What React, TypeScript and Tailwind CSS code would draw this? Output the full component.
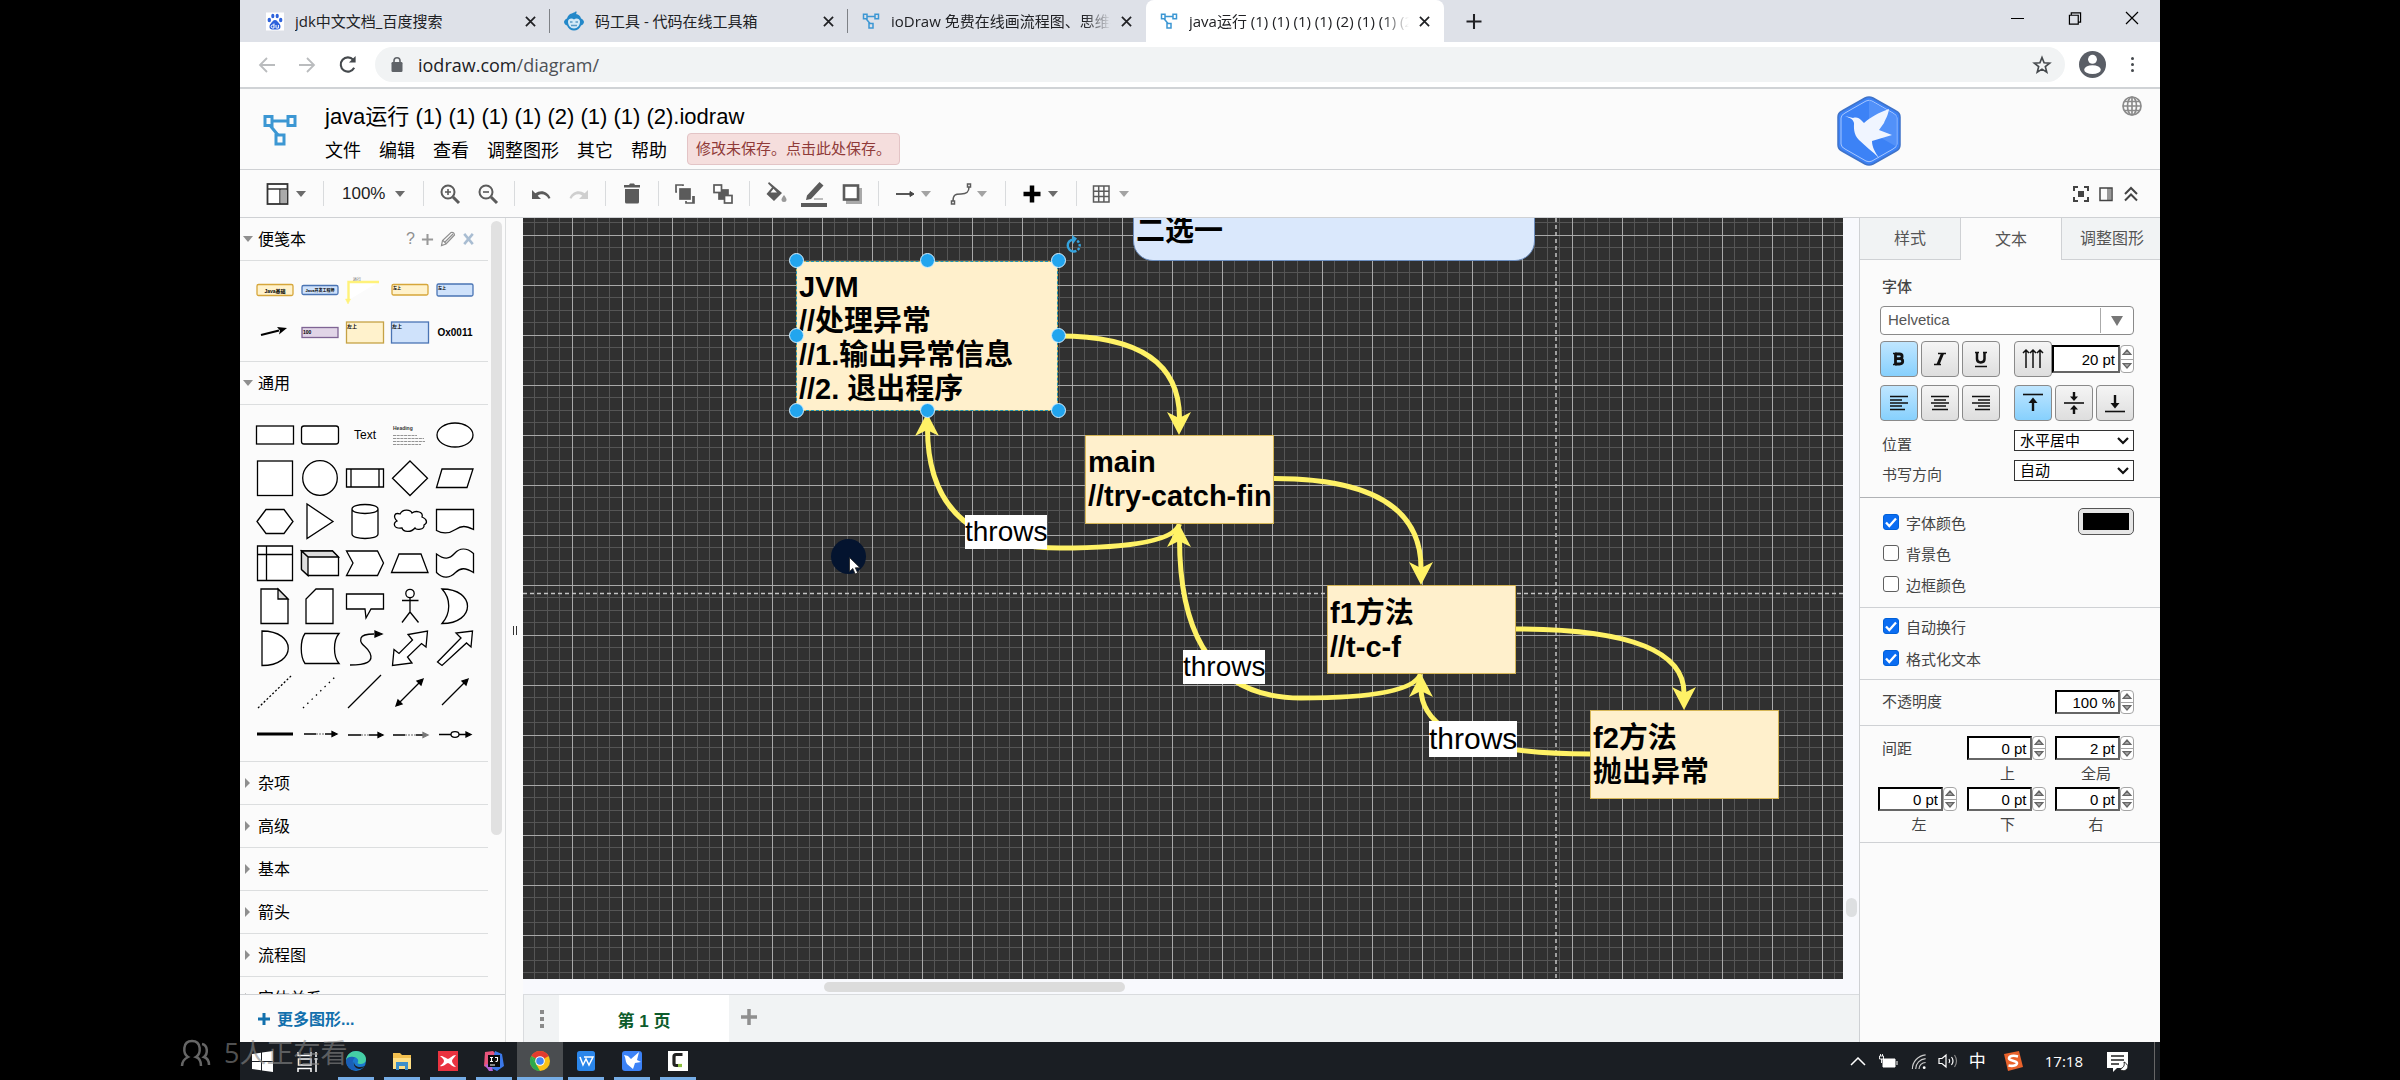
import React from 'react';

const UI = "font-['Open_Sans','Noto_Sans_CJK_SC',sans-serif]";
const APP = "font-['Liberation_Sans','Noto_Sans_CJK_SC',sans-serif]";

/* ---------- shared icons ---------- */

function FlowLogo({ className }: { className: string }) {
  return (
    <svg viewBox="0 0 34 32" className={className} fill="none" stroke="#3c97d3" strokeWidth="3">
      <rect x="2" y="2.5" width="7" height="9" />
      <rect x="25" y="2.5" width="7" height="9" />
      <rect x="13" y="21" width="8" height="9" />
      <path d="M9 7H25M7.500 12L15 21" />
    </svg>
  );
}

function Caret({ dim = false }: { dim?: boolean }) {
  return (
    <svg viewBox="0 0 10 6" className="h-[6px] w-[10px] shrink-0" fill={dim ? '#a3a3a3' : '#6b6b6b'}>
      <path d="M0 0h10L5 6z" />
    </svg>
  );
}

/* ---------- browser chrome ---------- */

type TabInfo = { title: string; icon: React.ReactNode; active?: boolean; line?: boolean; fade?: boolean };

const paw = (
  <svg viewBox="0 0 18 18" className="h-[19px] w-[18px] shrink-0">
    <rect width="18" height="18" fill="#fff" />
    <g fill="#2d62dc">
      <ellipse cx="3.300" cy="7.500" rx="1.700" ry="2.200" />
      <ellipse cx="6.800" cy="3.500" rx="1.600" ry="2.300" />
      <ellipse cx="11.200" cy="3.500" rx="1.600" ry="2.300" />
      <ellipse cx="14.700" cy="7.500" rx="1.700" ry="2.200" />
      <path d="M9 7.500c2 0 2.800 2 4.200 3.400 2 2 1.800 6-1.400 6H6.200c-3.200 0-3.400-4-1.400-6C6.200 9.500 7 7.500 9 7.500z" />
    </g>
    <path d="M8 11v4.500H6.500c-1.800 0-1.800-3 0-3H8M10 12.500v2.500q0 .6.700.6h1.700v-3.100" fill="none" stroke="#fff" strokeWidth="1" />
  </svg>
);

const monkey = (
  <svg viewBox="0 0 20 20" className="h-[20px] w-[20px] shrink-0">
    <path d="M12 0c-1 2-5 2-7 4-1 1-1.500 2-2 3.500-1.500.5-3 2-3 3.500s1.500 3 3 3.500C4 17.500 7 19.500 10 19.500s6-2 7-5c1.500-.5 3-2 3-3.500s-1.500-3-3-3.500C16.500 5 14.500 3.500 12 3c.8-.8.8-2 0-3z" fill="#2388c9" />
    <path d="M10 8.500C12 6.500 16 7.500 16 10.500c0 4-2.500 7-6 7s-6-3-6-7C4 7.500 8 6.500 10 8.500z" fill="#d3e9f7" />
    <path d="M6 11h2.500M11.500 11H14M7 14.500h6" stroke="#5c9cc6" strokeWidth="1.300" />
  </svg>
);

const tabs: TabInfo[] = [
  { title: 'jdk中文文档_百度搜索', icon: paw, line: true },
  { title: '码工具 - 代码在线工具箱', icon: monkey, line: true },
  { title: 'ioDraw 免费在线画流程图、思维导图', icon: <FlowLogo className="h-[16px] w-[18px] shrink-0" />, fade: true },
  { title: 'java运行 (1) (1) (1) (1) (2) (1) (1) (2)', icon: <FlowLogo className="h-[16px] w-[18px] shrink-0" />, active: true, fade: true },
];

function TabStrip() {
  return (
    <div className="flex h-[42px] items-stretch bg-[#dee1e8] pl-[12px]">
      <div role="tablist" className="flex">
        {tabs.map((t) => (
          <div
            key={t.title}
            role="tab"
            aria-selected={!!t.active}
            className={`relative flex w-[298px] items-center pl-[14px] pr-[13px] text-[15px] text-[#202124] ${t.active ? 'rounded-t-[8px] bg-white' : ''}`}
          >
            {t.icon}
            <span
              className={`ml-[11px] mr-[8px] flex-1 overflow-hidden whitespace-nowrap ${t.fade ? '[mask-image:linear-gradient(to_right,black_88%,transparent)]' : ''}`}
            >
              {t.title}
            </span>
            <button aria-label="关闭标签页" className="flex w-[14px] justify-center">
              <svg viewBox="0 0 12 12" className="h-[11px] w-[11px]" stroke="#202124" strokeWidth="1.900">
                <path d="M1 1l10 10M11 1L1 11" />
              </svg>
            </button>
            {t.line && <span className="absolute right-0 top-[9px] h-[24px] w-px bg-[#7e8186]" />}
          </div>
        ))}
      </div>
      <button aria-label="新标签页" className="ml-[22px] flex w-[18px] items-center">
        <svg viewBox="0 0 16 16" className="h-[15px] w-[16px]" stroke="#202124" strokeWidth="2.200">
          <path d="M8 0v16M0 8h16" />
        </svg>
      </button>
      <div className="ml-auto flex">
        <button aria-label="最小化" className="flex h-[36px] w-[57px] items-center justify-center">
          <span className="h-px w-[13px] bg-black" />
        </button>
        <button aria-label="还原" className="flex h-[36px] w-[57px] items-center justify-center">
          <svg viewBox="0 0 14 14" className="h-[13px] w-[14px]" fill="none" stroke="#000" strokeWidth="1.300">
            <path d="M1 3.500h9.500V13H1zM3 3.500V1h10v10h-2.500" />
          </svg>
        </button>
        <button aria-label="关闭" className="flex h-[36px] w-[57px] items-center justify-center">
          <svg viewBox="0 0 14 14" className="h-[14px] w-[14px]" stroke="#000" strokeWidth="1.200">
            <path d="M1 1l12 12M13 1L1 13" />
          </svg>
        </button>
      </div>
    </div>
  );
}

function AddressBar() {
  return (
    <div className="flex h-[47px] items-center border-b-2 border-[#d0d3d6] bg-white">
      <button aria-label="后退" className="ml-[18px] w-[18px]">
        <svg viewBox="0 0 18 16" className="h-[16px] w-[18px]" fill="none" stroke="#babcbe" strokeWidth="1.800">
          <path d="M17 8H2M9 1L2 8l7 7" />
        </svg>
      </button>
      <button aria-label="前进" className="ml-[22px] w-[18px]">
        <svg viewBox="0 0 18 16" className="h-[16px] w-[18px]" fill="none" stroke="#babcbe" strokeWidth="1.800">
          <path d="M1 8h15M9 1l7 7-7 7" />
        </svg>
      </button>
      <button aria-label="重新加载" className="ml-[22px] w-[20px]">
        <svg viewBox="0 0 20 20" className="h-[19px] w-[20px]" fill="none" stroke="#45494d" strokeWidth="2.200">
          <path d="M16.500 13.500A7.500 7.500 0 1 1 15.500 5" />
          <path d="M18 1v7h-7z" fill="#45494d" stroke="none" />
        </svg>
      </button>
      <div className="ml-[17px] flex h-[35px] flex-1 items-center rounded-full bg-[#f1f3f4] pl-[16px] pr-[13px]">
        <svg viewBox="0 0 12 15" className="h-[15px] w-[12px]">
          <rect x="0.500" y="5" width="11" height="10" rx="1.200" fill="#5f6368" />
          <path d="M3 6V3.800a3 3 0 0 1 6 0V6" fill="none" stroke="#5f6368" strokeWidth="1.600" />
        </svg>
        <span className="ml-[15px] text-[18px] leading-[24px] text-[#202124]">
          iodraw.com<span className="text-[#4d5156]">/diagram/</span>
        </span>
        <button aria-label="收藏" className="ml-auto">
          <svg viewBox="0 0 24 24" className="h-[22px] w-[20px]" fill="none" stroke="#45494d" strokeWidth="2">
            <path d="M12 3l2.500 6.300 6.700.4-5.200 4.300 1.700 6.600L12 17l-5.700 3.600L8 14 2.800 9.700l6.700-.4z" />
          </svg>
        </button>
      </div>
      <button aria-label="用户" className="ml-[14px]">
        <svg viewBox="0 0 26 26" className="h-[27px] w-[27px]">
          <circle cx="13" cy="13" r="13" fill="#5a5e66" />
          <circle cx="13" cy="8" r="4.300" fill="#fff" />
          <ellipse cx="13" cy="18" rx="8" ry="4.200" fill="#fff" />
        </svg>
      </button>
      <button aria-label="菜单" className="ml-[22px] mr-[24px] flex w-[8px] flex-col items-center gap-[3px]">
        <span className="h-[3px] w-[3px] rounded-full bg-[#45494d]" />
        <span className="h-[3px] w-[3px] rounded-full bg-[#45494d]" />
        <span className="h-[3px] w-[3px] rounded-full bg-[#45494d]" />
      </button>
    </div>
  );
}

/* ---------- editor header ---------- */

function Header() {
  return (
    <header className="flex h-[81px] items-start border-b border-[#cfd1d4] bg-[#fbfbfb]">
      <FlowLogo className="ml-[23px] mt-[25px] h-[32px] w-[34px]" />
      <div className="ml-[28px] mt-[12px]">
        <h1 className="text-[22px] leading-[32px] text-black">java运行 (1) (1) (1) (1) (2) (1) (1) (2).iodraw</h1>
        <div className="flex h-[32px] items-center">
          <nav className="flex gap-[18px] pt-[4px] text-[18px] leading-[32px] text-black">
            {['文件', '编辑', '查看', '调整图形', '其它', '帮助'].map((m) => (
              <button key={m}>{m}</button>
            ))}
          </nav>
          <button className="ml-[20px] h-[32px] rounded-[4px] border border-[#e3c4c6] bg-[#f5dedd] px-[8px] text-[15px] text-[#8f3a38]">
            修改未保存。点击此处保存。
          </button>
        </div>
      </div>
      <div className="ml-auto flex items-start">
        <svg viewBox="0 0 64 70" className="mt-[7px] h-[70px] w-[64px]">
          <path d="M28 2q4-2 8 0l23 13q4 2 4 6v28q0 4-4 6L36 68q-4 2-8 0L5 55q-4-2-4-6V21q0-4 4-6z" fill="#3c82f6" stroke="#3f73c9" strokeWidth="1.500" />
          <path d="M29 5q3-1.500 6 0l21 12q4 2 4 5v26q0 3-4 5L35 65q-3 1.500-6 0L8 53q-4-2-4-5V22q0-3 4-5z" fill="none" stroke="#a8c8ff" />
          <path d="M32 4v31l28 16V20z" fill="#5b97fb" opacity=".7" />
          <path d="M8 20l8 2c4-1 6 0 8 2l3 3c7-6 14-10 25-14-1 7-4 11-5 14l-5 7 13 5-20 6c0 6 3 11 7 17-7-7-14-12-20-18-6-6-5-13-5-17-1-4-4-5-9-7z" fill="#f0f5ff" />
        </svg>
        <button aria-label="语言" className="ml-[220px] mr-[17px] mt-[6px]">
          <svg viewBox="0 0 22 22" className="h-[22px] w-[22px]" fill="none" stroke="#8b8b8b" strokeWidth="1.700">
            <circle cx="11" cy="11" r="9" />
            <ellipse cx="11" cy="11" rx="4.500" ry="9" />
            <path d="M2 11h18M11 2v18M3.500 6.500h15M3.500 15.500h15" />
          </svg>
        </button>
      </div>
    </header>
  );
}

/* ---------- toolbar ---------- */

function Group({ children, last = false }: { children: React.ReactNode; last?: boolean }) {
  return (
    <div className="flex h-full items-center">
      <div className="flex items-center px-[7px]">{children}</div>
      {!last && <span className="h-[25px] w-px bg-[#d9dbdd]" />}
    </div>
  );
}

function Tool({ label, children, wide = false }: { label: string; children: React.ReactNode; wide?: boolean }) {
  return (
    <button
      aria-label={label}
      className={`flex h-[34px] shrink-0 items-center ${wide ? 'w-[56px] gap-[4px] pl-[7px]' : 'w-[38px] justify-center'}`}
    >
      {children}
    </button>
  );
}

const I = 'h-[24px] w-[24px] shrink-0';

function Toolbar() {
  return (
    <div className="flex h-[48px] items-center border-b border-[#cfd1d4] bg-[#fbfbfb]">
      <button aria-label="视图" className="flex w-[83px] items-center gap-[7px] pl-[25px]">
        <svg viewBox="0 0 24 24" className={I}>
          <rect x="2.500" y="2" width="20" height="20" fill="#fff" stroke="#333" strokeWidth="1.800" />
          <path d="M2 7h20M15 7v15" stroke="#333" strokeWidth="1.500" />
          <rect x="15.500" y="8" width="6" height="13" fill="#aaa" />
        </svg>
        <Caret />
      </button>
      <span className="h-[25px] w-px bg-[#d9dbdd]" />
      <button className="flex w-[99px] items-center gap-[10px] pl-[18px] text-[17px] text-[#222]">
        100% <Caret />
      </button>
      <span className="h-[25px] w-px bg-[#d9dbdd]" />
      <Group>
        <Tool label="放大">
          <svg viewBox="0 0 24 24" className={I} fill="none" stroke="#5b5b5b" strokeWidth="2">
            <circle cx="10" cy="10" r="6.500" />
            <path d="M7 10h6M10 7v6" strokeWidth="1.600" />
            <path d="M15 15l6 6" strokeWidth="3" />
          </svg>
        </Tool>
        <Tool label="缩小">
          <svg viewBox="0 0 24 24" className={I} fill="none" stroke="#5b5b5b" strokeWidth="2">
            <circle cx="10" cy="10" r="6.500" />
            <path d="M7 10h6" strokeWidth="1.600" />
            <path d="M15 15l6 6" strokeWidth="3" />
          </svg>
        </Tool>
      </Group>
      <Group>
        <Tool label="撤销">
          <svg viewBox="0 0 24 24" className={I} fill="#5b5b5b">
            <path d="M3 8v9h9l-3.300-3.300c3.800-2.800 8.500-1.500 10.800 3l2-.8C18.800 9 11.500 7.200 6.300 11.300z" />
          </svg>
        </Tool>
        <Tool label="重做">
          <svg viewBox="0 0 24 24" className={I} fill="#cfcfcf">
            <path d="M21 8v9h-9l3.300-3.300c-3.800-2.800-8.500-1.500-10.800 3l-2-.8C5.200 9 12.500 7.200 17.700 11.300z" />
          </svg>
        </Tool>
      </Group>
      <Group>
        <Tool label="删除">
          <svg viewBox="0 0 24 24" className={I} fill="#5b5b5b">
            <path d="M4 3h5l1-1.500h4L15 3h5v2.500H4zM5 7h14v13q0 1.500-1.500 1.500h-11Q5 21.500 5 20z" />
          </svg>
        </Tool>
      </Group>
      <Group>
        <Tool label="移至最前">
          <svg viewBox="0 0 24 24" className={I} fill="none" stroke="#5b5b5b" strokeWidth="1.700">
            <rect x="7" y="7" width="10" height="10" fill="#5b5b5b" />
            <path d="M4 10H3V3h7v1M20 14v7h-7v-2M14 21h7v-7" />
          </svg>
        </Tool>
        <Tool label="移至最后">
          <svg viewBox="0 0 24 24" className={I} fill="none" stroke="#5b5b5b" strokeWidth="1.700">
            <rect x="8" y="8" width="9" height="9" fill="#5b5b5b" />
            <rect x="3" y="3" width="7.500" height="7.500" fill="#fff" />
            <rect x="13.500" y="13.500" width="7.500" height="7.500" fill="#fff" />
          </svg>
        </Tool>
      </Group>
      <Group>
        <Tool label="填充颜色">
          <svg viewBox="0 0 24 24" className={I} fill="#5b5b5b">
            <path d="M5 0l-1 1.500 4 4L2.500 12l7.500 7 8-8zM9.500 6.800L13 10.500H6.500z" fillRule="evenodd" />
            <path d="M20 13s-2.500 3-2.500 4.500a2.500 2.500 0 0 0 5 0C22.500 16 20 13 20 13z" fill="#999" />
          </svg>
        </Tool>
        <Tool label="线条颜色">
          <svg viewBox="0 0 26 26" className="h-[26px] w-[26px]" fill="#5b5b5b">
            <path d="M5 19l1-4.500L18.500 1l4 3.500L10 18zM0 22h26v4H0z" />
            <path d="M13 18h9" stroke="#aaa" strokeWidth="1.500" />
          </svg>
        </Tool>
        <Tool label="阴影">
          <svg viewBox="0 0 24 24" className={I}>
            <rect x="6" y="6" width="16" height="16" fill="#a9a9a9" />
            <rect x="4" y="3.500" width="14" height="14" fill="#fff" stroke="#5b5b5b" strokeWidth="2.600" />
          </svg>
        </Tool>
      </Group>
      <Group>
        <Tool label="连线" wide>
          <svg viewBox="0 0 24 24" className={I} fill="#444" stroke="#444">
            <path d="M3 12h16" strokeWidth="1.800" />
            <path d="M17 9.500l4 2.500-4 2.500z" />
          </svg>
          <Caret dim />
        </Tool>
        <Tool label="路点" wide>
          <svg viewBox="0 0 24 24" className={I} fill="none" stroke="#5b5b5b" strokeWidth="1.500">
            <path d="M4 19c0-6 2-7 8-7s8-2 8-7" />
            <rect x="2.500" y="19" width="3" height="3" fill="#fff" />
            <rect x="18.500" y="2" width="3" height="3" fill="#fff" />
          </svg>
          <Caret dim />
        </Tool>
      </Group>
      <Group>
        <Tool label="插入" wide>
          <svg viewBox="0 0 24 24" className={I} stroke="#000" strokeWidth="4.500">
            <path d="M12 3.500v17M3.500 12h17" />
          </svg>
          <Caret />
        </Tool>
      </Group>
      <Group last>
        <Tool label="表格" wide>
          <svg viewBox="0 0 24 24" className={I} fill="none" stroke="#5b5b5b" strokeWidth="1.500">
            <path d="M2.500 4h15.500v16H2.500zM2.500 9.300H18M2.500 14.600H18M7.700 4v16M12.900 4v16" />
          </svg>
          <Caret dim />
        </Tool>
      </Group>
      <div className="ml-auto mr-[21px] flex items-center gap-[9px]">
        <button aria-label="全屏">
          <svg viewBox="0 0 16 16" className="h-[16px] w-[16px]" fill="none" stroke="#444" strokeWidth="2">
            <path d="M1 5V1h4M11 1h4v4M15 11v4h-4M5 15H1v-4" />
            <rect x="6" y="6" width="4" height="4" fill="#444" />
          </svg>
        </button>
        <button aria-label="格式面板">
          <svg viewBox="0 0 16 16" className="h-[16px] w-[16px]" fill="none" stroke="#444" strokeWidth="1.500">
            <path d="M11 2v12.500" stroke="#999" strokeWidth="4" />
            <rect x="2" y="2" width="12" height="12.500" />
          </svg>
        </button>
        <button aria-label="收起">
          <svg viewBox="0 0 16 16" className="h-[16px] w-[16px]" fill="none" stroke="#444" strokeWidth="2">
            <path d="M2 8l6-6 6 6M2 14.500l6-6 6 6" />
          </svg>
        </button>
      </div>
    </div>
  );
}

/* ---------- shape library ---------- */

const shapes: React.ReactNode[] = [
  <rect x="3.500" y="12" width="37" height="18" />,
  <rect x="3.500" y="12" width="37" height="18" rx="2.500" />,
  <text x="22" y="25" textAnchor="middle" fontSize="12" fill="#000" stroke="none">Text</text>,
  <g stroke="none" fill="#333">
    <text x="5" y="16" fontSize="5" fontWeight="bold">Heading</text>
    <path d="M5 21.500h24M5 24.500h31M5 27.500h32M5 30.500h28" stroke="#888" strokeWidth=".9" strokeDasharray="3 .7" />
  </g>,
  <ellipse cx="22" cy="21" rx="18" ry="12" />,

  <rect x="4.500" y="4" width="35" height="34.500" />,
  <circle cx="22" cy="21" r="17.300" />,
  <path d="M3.500 12h37v18h-37zM8 12v18M36 12v18" />,
  <path d="M22 4l17.500 17.300L22 38.500 4.500 21.300z" />,
  <path d="M9 12h31l-6 18.500H3.500z" />,

  <path d="M4 21.500L13 9.500h18l9 12L31 33.500H13z" />,
  <path d="M9 4v34.500l26-17z" />,
  <path d="M9 9v25c0 6 26 6 26 0V9c0-6-26-6-26 0c0 6 26 6 26 0" />,
  <path d="M12 14c3-6 11-4 12-1 4-3 12-1 10 4 5 2 6 6 2 8 1 5-8 5-9 3-4 5-12 4-13 0-9 1-9-5-5-7-4-4-3-9 3-7z" />,
  <path d="M3.500 9.500h37v20c-8-4-12-4-18 0-6 4-12 5-19 1z" />,

  <path d="M4.500 4h35v34.500h-35zM4.500 12.500h35M13.500 4v34.500" />,
  <g>
    <path d="M3.500 9h31l6 6v18.500H10l-6.500-6z" />
    <path d="M3.500 9h31l6 6H10z" fill="#ddd" />
    <path d="M3.500 9l6.500 6v18.500l-6.500-6z" fill="#ddd" />
  </g>,
  <path d="M3.500 9h31l6 12-6 12.500h-31L10 21z" />,
  <path d="M11 12h22l7 18.500H3.500z" />,
  <path d="M3.500 12c8 6 13 5 18-.500s12-6 19 0v19c-8-5-13-5-18 0s-12 7-19 0z" />,

  <g>
    <path d="M8 4h17l10 10v24.500H8z" />
    <path d="M25 4v10h10z" fill="#ddd" />
  </g>,
  <path d="M18 4h17v34.500H8V14z" />,
  <path d="M3.500 9h37v15H28l-5 9-1-9H3.500z" />,
  <g>
    <circle cx="22" cy="8.500" r="4.200" />
    <path d="M22 13v14M14 15.500h16.500M22 27l-8 10.500M22 27l8.500 10.500" />
  </g>,
  <path d="M9 4c34 0 34 34.500 0 34.500 9-10 9-25 0-34.500z" />,

  <path d="M9 4c35 0 35 34.500 0 34.500z" />,
  <path d="M7 6.500h34c-6 7-6 23 0 30H7c-5-7-5-23 0-30z" />,
  <g>
    <path d="M7 38c16 0 24-3 20-12-3-7-11-8-9-15 1-3 6-4 13-4" fill="none" />
    <path d="M32 4l7 3-7 3z" fill="#000" />
  </g>,
  <path d="M39.500 4l-1.500 16-4.500-3.500-14 13.500 4.500 6-19.500 2.500 1.500-16 5 4 13.500-13.500-4.500-5.500z" />,
  <path d="M39.500 4L38 20l-4.500-4L9 38.500 4.500 35 28 11l-5-5z" />,

  <path d="M5 38L38 6" strokeDasharray="2 2" />,
  <path d="M5 38L37 7" strokeDasharray="1.500 4.500" />,
  <path d="M5 38L38 5" />,
  <g>
    <path d="M9 35L34 10" />
    <path d="M35 9l-6 2 4 4zM8 36l6-2-4-4z" fill="#000" />
  </g>,
  <g>
    <path d="M9 35L34 10" />
    <path d="M35 9l-6 2 4 4z" fill="#000" />
  </g>,

  <path d="M4 21h36" strokeWidth="2.800" />,
  <g>
    <path d="M6 21h12M27 21h8" />
    <path d="M18 21h9" stroke="#999" strokeDasharray="2 1" />
    <path d="M34 18.500l5 2.500-5 2.500z" fill="#000" />
  </g>,
  <g>
    <path d="M5 22h13M26 22h9" />
    <path d="M18 22h8" stroke="#999" strokeDasharray="2 1" />
    <path d="M35 19.500l5 2.500-5 2.500z" fill="#000" />
  </g>,
  <g>
    <path d="M5 22h12M28 22h8" />
    <path d="M17 22h11" stroke="#999" strokeDasharray="2 1" />
    <path d="M35 19.500l5 2.500-5 2.500z" fill="#777" stroke="#777" />
  </g>,
  <g>
    <path d="M6 21.500h12M26 21.500h9" />
    <ellipse cx="22" cy="21.500" rx="4" ry="2.800" />
    <path d="M33 19l5 2.500-5 2.500z" fill="#000" />
  </g>,
];

const scratch: React.ReactNode[] = [
  <g>
    <rect x="4" y="15.500" width="36" height="11" rx="1.500" fill="#fff2cc" stroke="#d6a63a" />
    <text x="22" y="23.500" fontSize="5" fontWeight="bold" textAnchor="middle" fill="#000" stroke="none">Java基础</text>
  </g>,
  <g>
    <rect x="4" y="16.500" width="36" height="9" rx="1.500" fill="#cfe2fb" stroke="#4a74b4" />
    <text x="22" y="22.500" fontSize="4" fontWeight="bold" textAnchor="middle" fill="#000" stroke="none">Java开发工程师</text>
  </g>,
  <g stroke="#fff27a">
    <path d="M36 13H5.500v18" strokeWidth="2.400" />
    <path d="M2.500 30h5L5 35z" fill="#fff27a" strokeWidth=".5" />
    <text x="10" y="12" fontSize="4" fill="#555" stroke="none">运行</text>
  </g>,
  <g>
    <rect x="4" y="15.500" width="36" height="10.500" rx="1.500" fill="#fff2cc" stroke="#d6a63a" />
    <text x="5" y="21" fontSize="4" fontWeight="bold" fill="#000" stroke="none">左上</text>
  </g>,
  <g>
    <rect x="4" y="15" width="36" height="12" rx="1.500" fill="#cfe2fb" stroke="#4a74b4" />
    <text x="5" y="20.500" fontSize="4" fontWeight="bold" fill="#000" stroke="none">左上</text>
  </g>,
  <g>
    <path d="M8 24l18-4.500" strokeWidth="2" />
    <path d="M34 17l-10-1 3 3.500-1 4z" fill="#000" stroke="none" />
  </g>,
  <g>
    <rect x="4" y="16.500" width="36" height="10" fill="#e1d5e7" stroke="#7f6494" />
    <text x="5" y="23" fontSize="5" fontWeight="bold" fill="#000" stroke="none">100</text>
  </g>,
  <g>
    <rect x="3.500" y="11" width="37" height="21" fill="#fff2cc" stroke="#c5a245" />
    <text x="4" y="17" fontSize="5" fontWeight="bold" fill="#000" stroke="none">左上</text>
  </g>,
  <g>
    <rect x="3.500" y="11" width="37" height="21" fill="#cfe2fb" stroke="#4a74b4" />
    <text x="4" y="17" fontSize="5" fontWeight="bold" fill="#000" stroke="none">左上</text>
  </g>,
  <text x="22" y="25" fontSize="10" fontWeight="bold" textAnchor="middle" fill="#000" stroke="none">Ox0011</text>,
];

function Cell({ children }: { children: React.ReactNode }) {
  return (
    <div className="flex items-center justify-center">
      <svg viewBox="0 0 44 42" className="h-[42px] w-[44px]" fill="#fff" stroke="#000" strokeWidth="1.300">
        {children}
      </svg>
    </div>
  );
}

function SectionHead({ title, open = false, children }: { title: string; open?: boolean; children?: React.ReactNode }) {
  return (
    <div className="flex h-[43px] shrink-0 items-center border-b border-[#dcdedf] pl-[3px]">
      <button aria-expanded={open} className="flex items-center gap-[5px] text-[16px] text-black">
        <svg viewBox="0 0 10 10" className="h-[10px] w-[10px]" fill="#8f8f8f">
          {open ? <path d="M0 2h10L5 8z" /> : <path d="M2 0l5 5-5 5z" />}
        </svg>
        <span className="pt-[2px]">{title}</span>
      </button>
      {children}
    </div>
  );
}

function Sidebar() {
  return (
    <aside className="flex w-[266px] shrink-0 flex-col border-r border-[#dcdedf] bg-[#fbfbfb]">
      <div className="flex min-h-0 flex-1 overflow-hidden">
        <div className="w-[248px] shrink-0">
          <SectionHead title="便笺本" open>
            <div className="ml-auto mr-[13px] flex items-center gap-[6px] text-[#8f8f8f]">
              <button aria-label="帮助" className="text-[16px]">?</button>
              <button aria-label="添加">
                <svg viewBox="0 0 14 14" className="h-[13px] w-[13px]" stroke="#999" strokeWidth="2.200">
                  <path d="M7 1v12M1 7h12" />
                </svg>
              </button>
              <button aria-label="编辑">
                <svg viewBox="0 0 16 16" className="h-[16px] w-[16px]" fill="none" stroke="#8f8f8f" strokeWidth="1.200">
                  <path d="M1.500 14.500l1-5L11 1.500q3-.5 3.500 2.500L6 13zM3 9.500l3.500 3.500M5 11L13 3" />
                </svg>
              </button>
              <button aria-label="关闭">
                <svg viewBox="0 0 14 14" className="h-[12px] w-[13px]" stroke="#a9bdd2" strokeWidth="3">
                  <path d="M2 1l10 12M12 1L2 13" />
                </svg>
              </button>
            </div>
          </SectionHead>
          <div className="grid h-[101px] grid-cols-[repeat(5,45px)] content-start border-b border-[#dcdedf] pl-[12px] pt-[8px]">
            {scratch.map((s, i) => (
              <Cell key={i}>{s}</Cell>
            ))}
          </div>
          <SectionHead title="通用" open />
          <div className="border-b border-[#dcdedf] pb-[6px] pl-[12px] pt-[9px]">
            <div className="grid h-[341px] auto-rows-fr grid-cols-[repeat(5,45px)]">
              {shapes.map((s, i) => (
                <Cell key={i}>{s}</Cell>
              ))}
            </div>
          </div>
          {['杂项', '高级', '基本', '箭头', '流程图', '实体关系'].map((t) => (
            <SectionHead key={t} title={t} />
          ))}
        </div>
        <div className="ml-[3px] mt-[3px] h-[614px] w-[11px] rounded-full bg-[#e1e1e1]" />
      </div>
      <button className="flex h-[48px] shrink-0 items-center gap-[7px] border-t border-[#cfd1d4] pl-[18px] text-[16px] font-bold text-[#1270ad]">
        <svg viewBox="0 0 12 12" className="h-[12px] w-[12px]" stroke="#1270ad" strokeWidth="3">
          <path d="M6 0v12M0 6h12" />
        </svg>
        <span className="pt-[2px]">更多图形...</span>
      </button>
    </aside>
  );
}

/* ---------- diagram ---------- */

function Node({ className, lines }: { className: string; lines: string[] }) {
  return (
    <div
      className={`absolute flex flex-col justify-center whitespace-nowrap border border-[#d6b656] bg-[#fff0cc] pl-[2px] text-[29px] font-bold leading-[34px] text-black ${className}`}
    >
      {lines.map((l) => (
        <div key={l}>{l}</div>
      ))}
    </div>
  );
}

function Edges() {
  const down = 'M0 0l-12-23 12 6 12-6z';
  const up = 'M0 0l-12 23 12-6 12 6z';
  const heads = [
    [656, 217, down],
    [898, 367, down],
    [1161, 492, down],
    [404, 195, up],
    [656, 306, up],
    [898, 456, up],
  ] as const;
  return (
    <svg className="absolute inset-0 h-full w-full">
      <defs>
        <pattern id="grid" x="-1" y="17" width="50" height="50" patternUnits="userSpaceOnUse">
          <path d="M12.500 0v50M25.500 0v50M37.500 0v50M0 12.500h50M0 25.500h50M0 37.500h50" stroke="#555" />
          <path d="M.5 0v50M0 .5h50" stroke="#a9a9a9" />
        </pattern>
      </defs>
      <rect width="100%" height="100%" fill="url(#grid)" />
      <path d="M0 375.500H4000M1033 0V2000" stroke="#c4c4c4" strokeWidth="1.500" strokeDasharray="4 3" fill="none" />
      <g fill="none" stroke="#fff266" strokeWidth="5">
        <path d="M536 118Q656.500 118 656.500 200" />
        <path d="M751 260.500Q898 260.500 898 350" />
        <path d="M992 411Q1161 411 1161 475" />
        <path d="M656.500 306Q649 330 537 330Q404.500 330 404.500 210" />
        <path d="M897.500 456Q889 480 778 480Q656.500 480 656.500 320" />
        <path d="M1067 536Q898 536 898 470" />
      </g>
      <g fill="#fff266">
        {heads.map(([x, y, d], i) => (
          <path key={i} d={d} transform={`translate(${x} ${y})`} />
        ))}
      </g>
    </svg>
  );
}

const handles = [
  'left-[266px] top-[35px]', 'left-[397px] top-[35px]', 'left-[528px] top-[35px]',
  'left-[266px] top-[110px]', 'left-[528px] top-[110px]',
  'left-[266px] top-[185px]', 'left-[397px] top-[185px]', 'left-[528px] top-[185px]',
];

function Canvas() {
  return (
    <div className={`relative min-h-0 flex-1 overflow-hidden bg-[#303030] ${APP}`}>
      <Edges />
      <div className="absolute left-[610px] top-[-60px] h-[103px] w-[402px] rounded-[20px] border border-[#6c8ebf] bg-[#dae8fc] pl-[2px] pt-[55px] text-[29px] font-bold leading-[34px] text-black">
        二选一
      </div>
      <Node className="left-[273px] top-[43px] h-[150px] w-[262px] pt-[4px]" lines={['JVM', '//处理异常', '//1.输出异常信息', '//2. 退出程序']} />
      <Node className="left-[562px] top-[217px] h-[89px] w-[189px] pb-[2px]" lines={['main', '//try-catch-fin']} />
      <Node className="left-[804px] top-[367px] h-[89px] w-[189px]" lines={['f1方法', '//t-c-f']} />
      <Node className="left-[1067px] top-[492px] h-[89px] w-[189px]" lines={['f2方法', '抛出异常']} />
      <span className="absolute left-[442px] top-[297px] bg-white text-[28px] leading-[34px] text-black">throws</span>
      <span className="absolute left-[660px] top-[432px] bg-white text-[28px] leading-[34px] text-black">throws</span>
      <span className="absolute left-[906px] top-[503px] bg-white text-[30px] leading-[36px] text-black">throws</span>
      <div className="absolute left-[273px] top-[43px] h-[150px] w-[262px] border border-dashed border-[#1d93b5]" />
      {handles.map((h) => (
        <span key={h} className={`absolute h-[15px] w-[15px] rounded-full border border-[#d4efff] bg-[#22a5ee] ${h}`} />
      ))}
      <svg viewBox="0 0 16 18" className="absolute left-[543px] top-[17px] h-[18px] w-[16px]" fill="none" stroke="#35a3dd" strokeWidth="2.400">
        <path d="M7.500 4.500A6 6 0 0 0 8 16.500" />
        <path d="M8 16.500A6 6 0 0 0 11 5.500" strokeDasharray="2.500 1.500" />
        <path d="M6 0l5 3.500L7 9z" fill="#35a3dd" stroke="none" />
      </svg>
      <span className="absolute left-[308px] top-[321px] h-[35px] w-[35px] rounded-full bg-[#04142f]" />
      <svg viewBox="0 0 12 18" className="absolute left-[326px] top-[339px] h-[18px] w-[12px]" fill="#fff" stroke="#222" strokeWidth=".8">
        <path d="M.5 .5v14l3.300-3 2.400 5.500 2.500-1-2.400-5.200H11z" />
      </svg>
    </div>
  );
}

function Center() {
  return (
    <main className="flex min-w-0 flex-1 flex-col">
      <div className="flex min-h-0 flex-1 bg-[#f8f9fd]">
        <Canvas />
        <div className="flex w-[16px] shrink-0 flex-col items-center">
          <span className="mt-[680px] h-[19px] w-[11px] rounded-full bg-[#dddfe1]" />
        </div>
      </div>
      <div className="flex h-[15px] items-center bg-[#f8f9fd] pl-[301px]">
        <span className="h-[10px] w-[301px] rounded-full bg-[#dcdcdc]" />
      </div>
      <div className="flex h-[48px] shrink-0 border-l border-t border-[#d9dbde] bg-[#f1f3f4]">
        <button aria-label="页面菜单" className="flex w-[35px] flex-col items-center justify-center gap-[3px]">
          <span className="h-[4px] w-[4px] bg-[#8a8a8a]" />
          <span className="h-[4px] w-[4px] bg-[#8a8a8a]" />
          <span className="h-[4px] w-[4px] bg-[#8a8a8a]" />
        </button>
        <button className="w-[170px] bg-white pt-[6px] text-[17px] font-bold text-[#0d5c2c]">第 1 页</button>
        <button aria-label="添加页面" className="flex w-[39px] items-center justify-center pb-[4px]">
          <svg viewBox="0 0 16 16" className="h-[16px] w-[16px]" stroke="#8f8f8f" strokeWidth="3.500">
            <path d="M8 0v16M0 8h16" />
          </svg>
        </button>
      </div>
    </main>
  );
}

/* ---------- format panel ---------- */

function Spin({ tall = false }: { tall?: boolean }) {
  return (
    <span className={`flex w-[14px] flex-col rounded-[4px] border border-[#a5a5a5] bg-white ${tall ? 'h-[28px]' : 'h-[24px]'}`}>
      <button aria-label="增加" className="flex flex-1 items-center justify-center border-b border-[#a5a5a5]">
        <svg viewBox="0 0 10 6" className="h-[6px] w-[10px]" fill="#aaa" stroke="#666" strokeWidth="1.300"><path d="M1 5.500h8L5 1z" /></svg>
      </button>
      <button aria-label="减少" className="flex flex-1 items-center justify-center">
        <svg viewBox="0 0 10 6" className="h-[6px] w-[10px]" fill="#aaa" stroke="#666" strokeWidth="1.300"><path d="M1 .5h8L5 5z" /></svg>
      </button>
    </span>
  );
}

function Field({ value, label, hideLabel = false }: { value: string; label: string; hideLabel?: boolean }) {
  return (
    <label className="flex flex-col">
      <span className="flex">
        <input
          defaultValue={value}
          aria-label={label}
          className="h-[24px] w-[65px] border-[2px] border-b-[#666] border-l-black border-r-[#666] border-t-black bg-white pr-[3px] text-right text-[15px] text-black"
        />
        <Spin />
      </span>
      {!hideLabel && <span className="mt-[4px] h-[20px] pl-[3px] text-center text-[15px] leading-[20px]">{label}</span>}
    </label>
  );
}

function Fmt({ label, on = false, children }: { label: string; on?: boolean; children: React.ReactNode }) {
  return (
    <button
      aria-label={label}
      aria-pressed={on}
      className={`flex h-[36px] w-[38px] items-center justify-center rounded-[4px] border border-[#8a8a8a] bg-linear-to-b ${on ? 'from-[#bfe6ff] to-[#86d0fd]' : 'from-[#f5f5f5] to-[#dedede]'}`}
    >
      <svg viewBox="0 0 22 22" className="h-[22px] w-[22px]" fill="none" stroke="#111" strokeWidth="1.600">
        {children}
      </svg>
    </button>
  );
}

function Check({ label, on = false, children }: { label: string; on?: boolean; children?: React.ReactNode }) {
  return (
    <div className="flex items-center">
      <label className="flex h-[20px] items-center gap-[7px] pl-[5px] text-[15px]">
        <span className="relative flex">
          <input
            type="checkbox"
            defaultChecked={on}
            className="peer h-[16px] w-[16px] appearance-none rounded-[3px] border border-[#5f5f5f] bg-white checked:border-[#0060d8] checked:bg-[#0b6df2]"
          />
          <svg viewBox="0 0 16 16" className="pointer-events-none absolute inset-0 hidden h-[16px] w-[16px] peer-checked:block" fill="none" stroke="#fff" strokeWidth="2.300">
            <path d="M3 8.500L6.300 12 13 4.500" />
          </svg>
        </span>
        <span className="pt-[5px]">{label}</span>
      </label>
      {children}
    </div>
  );
}

function Drop({ label, value }: { label: string; value: string }) {
  return (
    <label className="mt-[9px] flex items-center justify-between pl-[4px] text-[15px]">
      <span className="h-[21px] pt-[4px] leading-[21px]">{label}</span>
      <span className="relative">
        <select className="block h-[21px] w-[120px] appearance-none border border-[#333] bg-white pl-[5px] text-[15px] leading-[19px] text-black">
          <option>{value}</option>
        </select>
        <svg viewBox="0 0 12 8" className="pointer-events-none absolute right-[5px] top-[7px] h-[8px] w-[12px]" fill="none" stroke="#111" strokeWidth="2.200">
          <path d="M1 1l5 5 5-5" />
        </svg>
      </span>
    </label>
  );
}

const sect = 'border-b border-[#cfd1d4] pl-[18px] pr-[26px]';

function FormatPanel() {
  return (
    <aside className="flex w-[301px] shrink-0 flex-col border-l border-[#cfd1d4] bg-[#fbfbfb] text-[#444]">
      <div role="tablist" className="flex h-[42px] text-[16px] text-[#555]">
        <button role="tab" aria-selected={false} className="w-[101px] border-b border-r border-[#cfd1d4] bg-[#f1f3f4]">样式</button>
        <button role="tab" aria-selected={true} className="w-[100px] pt-[2px]">文本</button>
        <button role="tab" aria-selected={false} className="flex-1 border-b border-l border-[#cfd1d4] bg-[#f1f3f4] pl-[2px]">调整图形</button>
      </div>
      <section className="border-b border-[#b0b2b5] pb-[16px] pl-[18px] pr-[26px]">
        <div className="mt-[17px] pl-[4px] text-[15px] font-medium leading-[20px]">字体</div>
        <div className="ml-[2px] mt-[9px] flex h-[29px] rounded-[4px] border border-[#8a8a8a] bg-white">
          <input aria-label="字体" defaultValue="Helvetica" className="min-w-0 flex-1 bg-transparent pl-[7px] text-[15px] text-[#555]" />
          <button aria-label="选择字体" className="my-px flex w-[33px] items-center justify-center border-l border-[#aaa]">
            <svg viewBox="0 0 12 10" className="h-[10px] w-[12px]" fill="#777"><path d="M0 0h12L6 10z" /></svg>
          </button>
        </div>
        <div className="ml-[2px] mt-[6px] flex items-center justify-between">
          <div className="flex gap-[3px]">
            <Fmt label="粗体" on>
              <path d="M7 6h4.500c3.500 0 3.500 4.700 0 4.700H7M11.500 10.700c4.300 0 4.300 5.300 0 5.300H7M7.500 6v10" strokeWidth="2.800" />
              <path d="M5 5.500h4M5 16.500h4" strokeWidth="1.500" />
            </Fmt>
            <Fmt label="斜体">
              <path d="M9 5.500h8M5 16.500h7" />
              <path d="M13.500 5.500l-4.500 11" strokeWidth="3" />
            </Fmt>
            <Fmt label="下划线">
              <path d="M7 4.500v6.500c0 4.500 7.500 4.500 7.500 0V4.500" strokeWidth="2.500" />
              <path d="M5 18.500h12M5 4.500h4M13 4.500h4" />
            </Fmt>
          </div>
          <div className="flex items-center">
            <Fmt label="文字方向">
              <path d="M4 20V2M11 20V2M18 20V2M1 5l3-3 3 3M8 5l3-3 3 3M15 5l3-3 3 3" strokeWidth="1.500" />
            </Fmt>
            <input
              aria-label="字号"
              defaultValue="20 pt"
              className="h-[28px] w-[68px] border-[2px] border-b-[#666] border-l-black border-r-[#666] border-t-black bg-white pr-[3px] text-right text-[15px] text-black"
            />
            <Spin tall />
          </div>
        </div>
        <div className="ml-[2px] mt-[8px] flex justify-between">
          <div className="flex gap-[3px]">
            <Fmt label="左对齐" on>
              <path d="M2 4.500h18M2 8h12M2 11h18M2 14h12M2 17.500h15" />
            </Fmt>
            <Fmt label="居中">
              <path d="M2 4.500h18M5 8h12M2 11h18M5 14h12M3 17.500h16" />
            </Fmt>
            <Fmt label="右对齐">
              <path d="M2 4.500h18M8 8h12M2 11h18M8 14h12M5 17.500h15" />
            </Fmt>
          </div>
          <div className="flex gap-[3px]">
            <Fmt label="顶端对齐" on>
              <path d="M1 2.500h20" />
              <path d="M11 19v-9" strokeWidth="2.400" />
              <path d="M6.500 11L11 5.500l4.500 5.500z" fill="#111" stroke="none" />
            </Fmt>
            <Fmt label="垂直居中">
              <path d="M1 11h20" />
              <path d="M11 -2v7M11 24v-7" strokeWidth="2.400" />
              <path d="M7 4.500h8L11 9zM7 17.500h8L11 13z" fill="#111" stroke="none" />
            </Fmt>
            <Fmt label="底端对齐">
              <path d="M1 19.500h20" />
              <path d="M11 3v9" strokeWidth="2.400" />
              <path d="M6.500 11L11 16.500l4.500-5.500z" fill="#111" stroke="none" />
            </Fmt>
          </div>
        </div>
        <Drop label="位置" value="水平居中" />
        <Drop label="书写方向" value="自动" />
      </section>
      <section className={`${sect} pb-[13px] pt-[10px]`}>
        <Check label="字体颜色" on>
          <button aria-label="选择字体颜色" className="ml-auto h-[27px] w-[56px] rounded-[5px] border border-[#555] bg-[#e6e6e6] p-[4px]">
            <span className="block h-full bg-black" />
          </button>
        </Check>
        <div className="mt-[8px] flex flex-col gap-[11px]">
          <Check label="背景色" />
          <Check label="边框颜色" />
        </div>
      </section>
      <section className={`${sect} flex flex-col gap-[12px] pb-[11px] pt-[8px]`}>
        <Check label="自动换行" on />
        <Check label="格式化文本" on />
      </section>
      <section className={`${sect} flex items-center justify-between pb-[11px] pt-[10px]`}>
        <span className="pl-[4px] text-[15px]">不透明度</span>
        <Field value="100 %" label="不透明度" hideLabel />
      </section>
      <section className={`${sect} pb-[7px] pt-[10px]`}>
        <div className="flex justify-between">
          <span className="w-[79px] pl-[4px] pt-px text-[15px] leading-[24px]">间距</span>
          <Field value="0 pt" label="上" />
          <Field value="2 pt" label="全局" />
        </div>
        <div className="mt-[3px] flex justify-between">
          <Field value="0 pt" label="左" />
          <Field value="0 pt" label="下" />
          <Field value="0 pt" label="右" />
        </div>
      </section>
    </aside>
  );
}

/* ---------- taskbar ---------- */

const apps: { name: string; on?: boolean; icon: React.ReactNode }[] = [
  {
    name: 'Edge',
    icon: (
      <g>
        <circle cx="11" cy="11" r="10" fill="#1b78cf" />
        <path d="M1 11C1 4 7 1 11 1c6 0 10 4 10 8 0 4-3 5-6 5-2 0-3-1-2-2 1-3-2-5-5-5-4 0-6 2-7 4z" fill="#45cfa5" />
        <path d="M1 10c2-4 7-4 9-2-3 1-4 9 4 11-8 4-13-3-13-9z" fill="#1a5fb8" />
        <path d="M9 12c0 5 6 6 11 4-2 2-4 3-6 3-4-1-6-4-5-7z" fill="#1b1f26" />
      </g>
    ),
  },
  {
    name: '文件资源管理器',
    icon: (
      <g>
        <path d="M2 3h7l2 2h9v14H2z" fill="#f3c04f" />
        <path d="M2 8h18v11H2z" fill="#ffdf85" />
        <path d="M5 20v-8h12v8h-3v-4H8v4z" fill="#3e8fc9" />
      </g>
    ),
  },
  {
    name: 'XMind',
    icon: (
      <g>
        <rect x="1" y="1" width="20" height="20" fill="#ea3340" />
        <path d="M3 6c4 0 5 2 8 3 3-1 4-4 8-4-2 3-4 4-4 6s2 4 4 6c-4 0-5-3-8-4-3 1-4 4-8 3 2-2 4-3 4-5S5 8 3 6z" fill="#fff" />
      </g>
    ),
  },
  {
    name: 'IntelliJ IDEA',
    icon: (
      <g>
        <path d="M2 2l8-1 4 4-8 14-5-3z" fill="#e8557c" />
        <path d="M12 1l7 3 2 12-7 5-6-3z" fill="#3b78e8" />
        <path d="M2 15l6-2 2 8-4 0z" fill="#b164d8" />
        <rect x="5" y="5" width="12" height="12" fill="#0b0b0b" />
        <path d="M7 7.500h3M8.500 7.500v4M7 11.500h3M12 7.500h2.500v3q0 1.200-2 1M7 15h5" fill="none" stroke="#fff" strokeWidth="1.100" />
      </g>
    ),
  },
  {
    name: 'Chrome',
    on: true,
    icon: (
      <g>
        <circle cx="11" cy="11" r="10" fill="#fbc116" />
        <path d="M11 11L2.300 6A10 10 0 0 1 19.700 6z" fill="#e33b2e" />
        <path d="M2.300 6L11 21A10 10 0 0 1 2.300 6z" fill="#2da94f" />
        <path d="M2.300 6l4.500 8L11 11z" fill="#2da94f" />
        <circle cx="11" cy="11" r="4.800" fill="#fff" />
        <circle cx="11" cy="11" r="3.800" fill="#4285f4" />
      </g>
    ),
  },
  {
    name: 'WPS',
    icon: (
      <g>
        <rect x="2" y="1" width="18" height="20" rx="2.500" fill="#2b86ea" />
        <path d="M5 7l3 8 3-6 3 6 4-8H9" fill="none" stroke="#fff" strokeWidth="1.500" />
      </g>
    ),
  },
  {
    name: '快鸟',
    icon: (
      <g>
        <rect x="1" y="1" width="20" height="20" rx="3" fill="#3c82f6" />
        <path d="M3 5l4 1 3 3 8-7-2 8 4 2-6 1-2 6-6-5c-2-3-1-6-3-9z" fill="#fff" />
      </g>
    ),
  },
  {
    name: 'Camtasia',
    icon: (
      <g>
        <rect x="1" y="1" width="20" height="20" fill="#fff" />
        <path d="M15.500 4.500H9q-2 0-2 2v7q0 2 2 2h5" fill="none" stroke="#222" strokeWidth="3.200" />
        <path d="M11 15.500h4" stroke="#8dbf3f" strokeWidth="3.200" />
      </g>
    ),
  },
];

function Taskbar() {
  return (
    <footer className="flex h-[38px] shrink-0 items-stretch bg-[#1a1e23] text-white">
      <button aria-label="开始" className="ml-[12px] flex w-[21px] items-center">
        <svg viewBox="0 0 21 21" className="h-[21px] w-[21px]" fill="#fff">
          <path d="M0 3l9-1.300V10H0zM10 1.600L21 0v10H10zM0 11h9v8.300L0 18zM10 11h11v10l-11-1.600z" />
        </svg>
      </button>
      <button aria-label="任务视图" className="ml-[24px] flex w-[21px] items-center">
        <svg viewBox="0 0 21 21" className="h-[21px] w-[21px]" fill="none" stroke="#fff" strokeWidth="1.500">
          <path d="M1 1v3.500h13V1M1.500 8h12.500v6H1.500zM1 21v-3.500h13V21M19 1v5M19 9v12M17.500 8h3" />
        </svg>
      </button>
      <div className="ml-[15px] flex">
        {apps.map((a) => (
          <button key={a.name} aria-label={a.name} className={`flex w-[46px] flex-col items-center ${a.on ? 'bg-[#4a4d50]' : ''}`}>
            <svg viewBox="0 0 22 22" className="mt-[8px] h-[22px] w-[22px]">{a.icon}</svg>
            <span className={`mt-auto h-[3px] bg-[#76ade6] ${a.on ? 'w-full' : 'w-[36px]'}`} />
          </button>
        ))}
      </div>
      <div className="ml-auto flex items-center">
        <svg viewBox="0 0 16 9" className="h-[9px] w-[16px]" fill="none" stroke="#fff" strokeWidth="1.500"><path d="M1 8l7-7 7 7" /></svg>
        <svg viewBox="0 0 20 14" className="ml-[12px] h-[14px] w-[20px]" fill="#fff" stroke="#fff">
          <path d="M5 5h12v8H5zM19 7v4" />
          <path d="M1.500 2h4v3h-4zM2.500 0v2M4.500 0v2M3.500 5v4" fill="none" strokeWidth=".9" />
        </svg>
        <svg viewBox="0 0 18 18" className="ml-[12px] h-[17px] w-[18px]" fill="none" stroke="#ccc" strokeWidth="1.200">
          <path d="M2 17C2 9 8 3 16 2M5.500 17C5.500 11 10 6.500 16 6M9 17c0-4 3-7 7-7" />
          <circle cx="14.500" cy="15.500" r="1.500" fill="#fff" stroke="none" />
        </svg>
        <svg viewBox="0 0 21 16" className="ml-[10px] h-[16px] w-[21px]" fill="none" stroke="#fff" strokeWidth="1.200">
          <path d="M1 5.500h3L8 2v12l-4-3.500H1zM11 6q1.500 2 0 4M13.500 4q3 4 0 8" />
          <path d="M16.500 2q4 6 0 12" stroke="#888" />
        </svg>
        <span className="ml-[10px] text-[17px] leading-[20px]">中</span>
        <svg viewBox="0 0 20 20" className="ml-[17px] h-[20px] w-[20px]">
          <path d="M1 3l15-3 4 16-15 4z" fill="#e9622b" />
          <path d="M15 5.500C10 4 6 5 6 7.500s8 2 8 4.500-4 3.500-8.500 2.500" fill="none" stroke="#fff" strokeWidth="2.600" />
        </svg>
        <time className="ml-[22px] text-[15px]">17:18</time>
        <svg viewBox="0 0 21 21" className="ml-[24px] h-[21px] w-[21px]">
          <path d="M0 1h21v16H10l-4 4v-4H0z" fill="#fff" />
          <path d="M4 5h13M4 9h13M4 13h8" stroke="#222" strokeWidth="1.400" />
          <path d="M17 11c1 4-1 6-4 7 2 3 7 2 8-2 0-2-2-4-4-5z" fill="#fff" stroke="#222" />
        </svg>
        <span className="ml-[26px] mr-[5px] h-[38px] w-px bg-[#666]" />
      </div>
    </footer>
  );
}

export default function App() {
  return (
    <div className="relative flex h-screen bg-black px-[10%]">
      <div className={`flex min-w-0 flex-1 flex-col bg-white ${UI}`}>
        <TabStrip />
        <AddressBar />
        <div className={`flex min-h-0 flex-1 flex-col ${APP}`}>
          <Header />
          <Toolbar />
          <div className="flex min-h-0 flex-1">
            <Sidebar />
            <div className="flex w-[17px] shrink-0 items-center justify-center bg-[#fbfbfb]">
              <span className="h-[9px] w-[4px] border-x border-[#333]" />
            </div>
            <Center />
            <FormatPanel />
          </div>
        </div>
        <Taskbar />
      </div>
      <div className={`pointer-events-none absolute bottom-[10px] left-[180px] flex items-center gap-[13px] text-[27px] leading-[34px] text-[#8a8a8a]/60 ${UI}`}>
        <svg viewBox="0 0 31 28" className="h-[28px] w-[31px]" fill="none" stroke="#666" strokeWidth="2.500">
          <path d="M2 27c0-5 2-7 6-9C3 15 2 2 12 2s9 13 4 16c3 1 5 4 5 9M22 5c6 1 6 10 2 13 3 1 5 4 5 8" />
        </svg>
        5人正在看
      </div>
    </div>
  );
}
